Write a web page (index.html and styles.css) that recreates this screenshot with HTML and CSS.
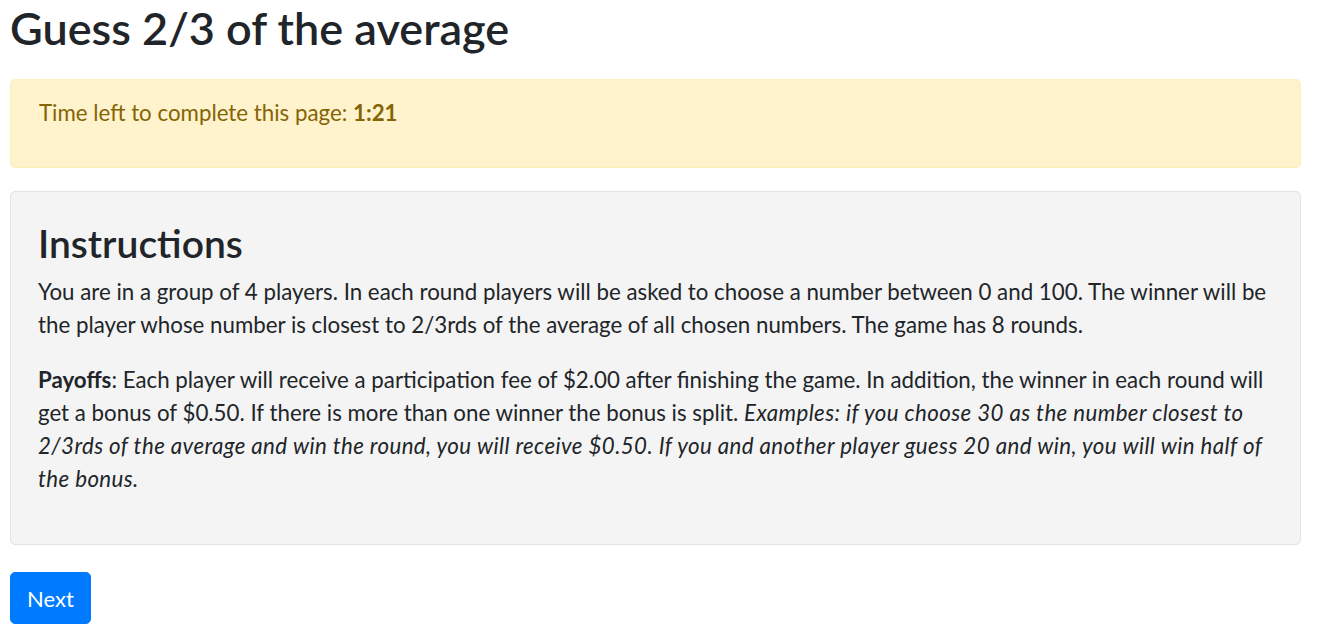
FILE: index.html
```html
<!DOCTYPE html>
<html lang="en">
<head>
<meta charset="utf-8">
<title>Guess 2/3 of the average</title>
<link rel="stylesheet" href="styles.css">
</head>
<body>
<div class="page">
  <h1 class="title">Guess 2/3 of the average</h1>
  <div class="alert">
    <p>Time left to complete this page: <b>1:21</b></p>
  </div>
  <div class="card">
    <div class="card-body">
      <h2 class="card-title">Instructions</h2>
      <p>You are in a group of 4 players. In each round players will be asked to choose a number between 0 and 100. The winner will be the player whose number is closest to 2/3rds of the average of all chosen numbers. The game has 8 rounds.</p>
      <p><b>Payoffs</b>: Each player will receive a participation fee of $2.00 after finishing the game. In addition, the winner in each round will get a bonus of $0.50. If there is more than one winner the bonus is split. <i>Examples: if you choose 30 as the number closest to 2/3rds of the average and win the round, you will receive $0.50. If you and another player guess 20 and win, you will win half of the bonus.</i></p>
    </div>
  </div>
  <button class="btn">Next</button>
</div>
</body>
</html>
```

FILE: styles.css
```css
* { box-sizing: border-box; }
html, body { margin: 0; padding: 0; background: #fff; }
body {
  font-family: Lato, "Noto Sans", sans-serif;
  font-size: 22.3px;
  line-height: 33px;
  color: #212529;
}
.page {
  padding: 0 24px 0 10px;
  display: flex;
  flex-direction: column;
  align-items: stretch;
}
.title {
  margin: 0 0 23px;
  font-size: 45px;
  line-height: 56px;
  font-weight: 600;
}
.alert {
  background: #fff3cd;
  border: 1px solid #ffeeba;
  border-radius: 5px;
  color: #856404;
  padding: 16px 28px;
  margin-bottom: 23px;
}
.alert p { margin: 0 0 22px; }
.alert b { font-weight: 700; }
.card {
  background: #f4f4f4;
  border: 1px solid #e2e2e2;
  border-radius: 5px;
}
.card-body { padding: 27px 27px 27px; }
.card-title {
  margin: 0 0 8px;
  font-size: 39px;
  line-height: 48px;
  font-weight: 600;
}
.card-body p { margin: 0 0 22px; }
.card-body i { letter-spacing: 0.4px; }
.btn {
  align-self: flex-start;
  margin-top: 27px;
  background: #007bff;
  color: #fff;
  border: 1px solid #007bff;
  border-radius: 5px;
  font-family: inherit;
  font-size: 22px;
  line-height: 33px;
  padding: 8.5px 16px;
}
```
